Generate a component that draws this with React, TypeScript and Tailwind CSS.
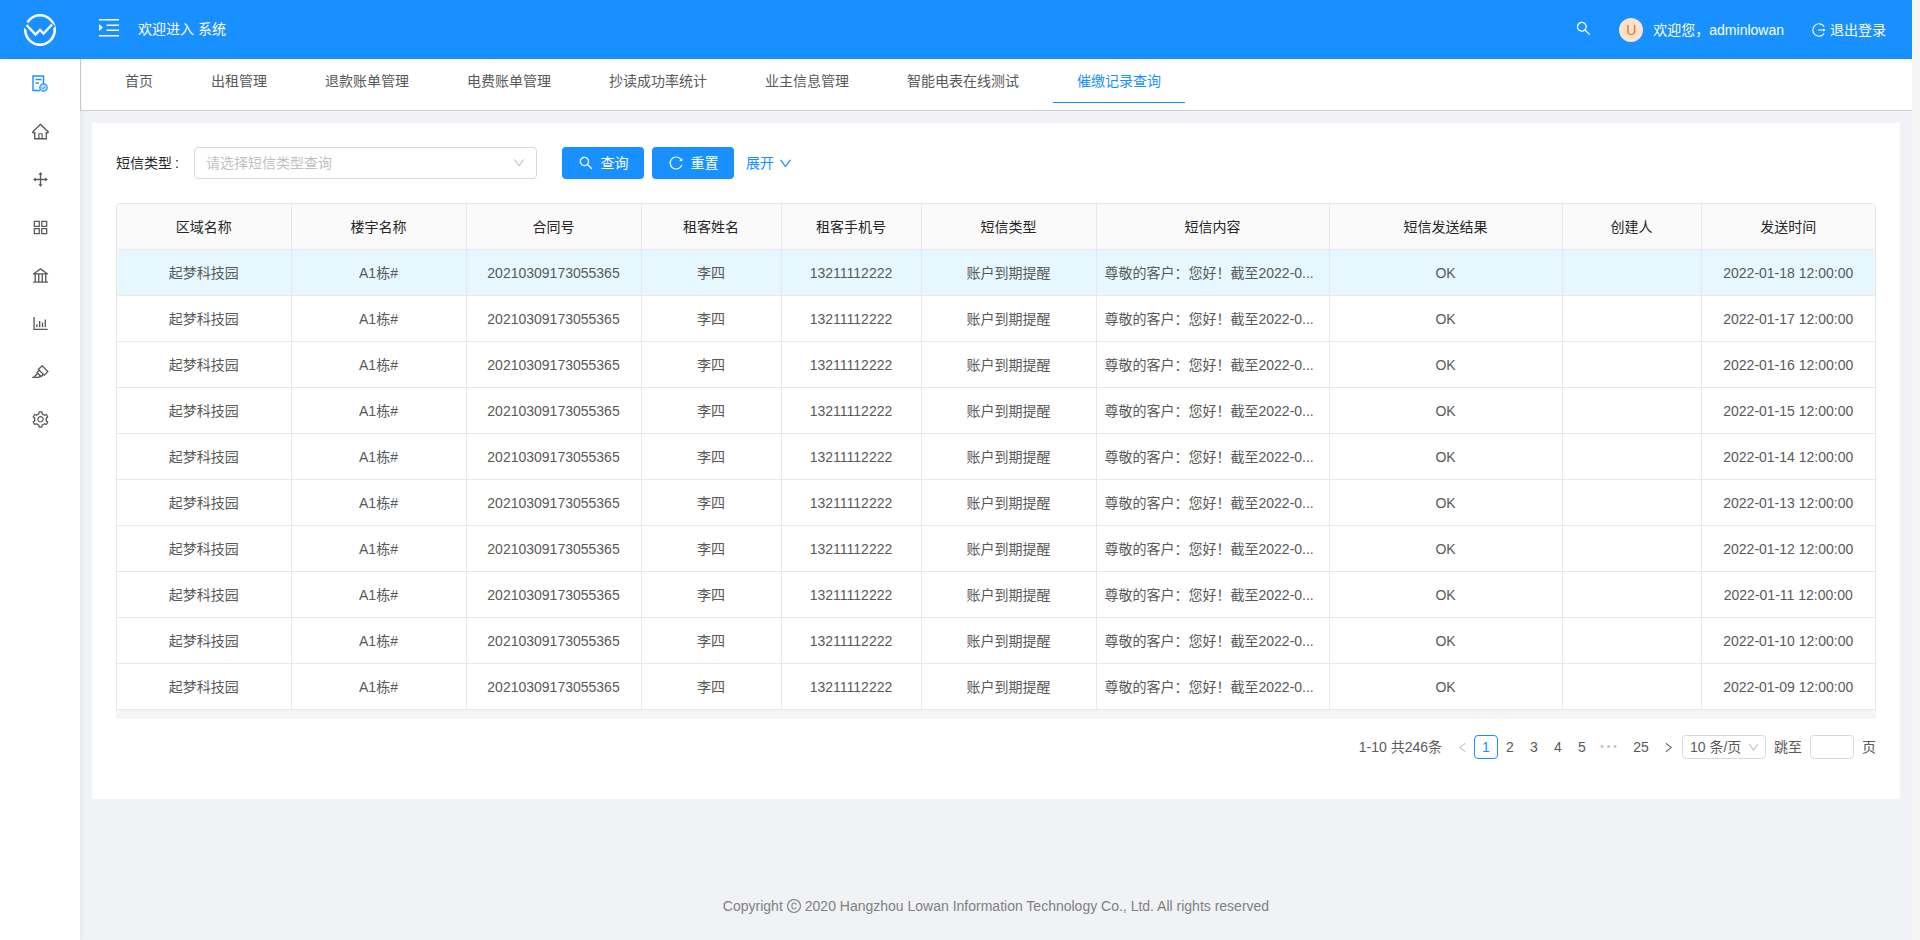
import React from "react";
import {
  AiOutlineSearch,
  AiOutlineHome,
  AiOutlineDrag,
  AiOutlineAppstore,
  AiOutlineBank,
  AiOutlineBarChart,
  AiOutlineHighlight,
  AiOutlineSetting,
  AiOutlineReload,
  AiOutlineDown,
  AiOutlineLeft,
  AiOutlineRight,
  AiOutlineCopyright,
} from "react-icons/ai";

const tabs = ["首页", "出租管理", "退款账单管理", "电费账单管理", "抄读成功率统计", "业主信息管理", "智能电表在线测试", "催缴记录查询"];
const cols = ["区域名称", "楼宇名称", "合同号", "租客姓名", "租客手机号", "短信类型", "短信内容", "短信发送结果", "创建人", "发送时间"];
const dates = ["18", "17", "16", "15", "14", "13", "12", "11", "10", "09"];

function Logo() {
  return (
    <svg width="34" height="34" viewBox="0 0 34 34" fill="none" stroke="white">
      <circle cx="17" cy="17" r="14.7" strokeWidth="2.6" />
      <path d="M1.5 10.5 L12.5 22.5 L17 18 L20.5 21.5 L30 11" stroke="#1890ff" strokeWidth="6" />
      <path d="M3.5 12 L12.5 21.5 L17 17 L20.5 20.5 L29 11.5" strokeWidth="2.4" />
    </svg>
  );
}

function MenuIcon() {
  return (
    <svg width="20" height="18" viewBox="0 0 20 18" fill="white">
      <rect x="0" y="0" width="20" height="1.5" />
      <rect x="7.5" y="5.5" width="12.5" height="1.5" />
      <rect x="7.5" y="10.5" width="12.5" height="1.5" />
      <rect x="0" y="16" width="20" height="1.5" />
      <path d="M0 5 L4 8.5 L0 12 Z" />
    </svg>
  );
}

function DocIcon() {
  return (
    <svg width="16" height="17" viewBox="0 0 16 17" fill="none" stroke="#1890ff">
      <path d="M11.5 9V1H1v14.5h7" strokeWidth="1.4" />
      <path d="M3.5 4.5h6M3.5 8h3.5" strokeWidth="1.4" />
      <circle cx="11.5" cy="12.5" r="3.7" fill="#bfe0ff" strokeWidth="1.2" />
      <path d="M9.8 12.5l1.3 1.3 2-2.2" strokeWidth="1" />
    </svg>
  );
}

function LogoutIcon() {
  return (
    <svg width="14" height="14" viewBox="0 0 14 14" fill="none" stroke="white" strokeWidth="1.1">
      <path d="M12.2 3.6A6.2 6.2 0 1 0 12.2 10.4" />
      <path d="M6 7h7" />
      <path d="M11 5.4 L13.4 7 L11 8.6" fill="white" stroke="none" />
    </svg>
  );
}

function Sidebar() {
  const icons = [AiOutlineHome, AiOutlineDrag, AiOutlineAppstore, AiOutlineBank, AiOutlineBarChart, AiOutlineHighlight, AiOutlineSetting];
  return (
    <aside className="relative z-10 w-[80px] shrink-0 bg-white shadow-[2px_0_3px_rgba(40,50,100,0.05)]">
      <div className="flex h-[48px] items-center justify-center">
        <DocIcon />
      </div>
      {icons.map((Icon, i) => (
        <div key={i} className="flex h-[48px] items-center justify-center text-[#595959]">
          <Icon size={19} />
        </div>
      ))}
    </aside>
  );
}

function Tabs() {
  return (
    <div className="flex h-[52px] border-b border-l border-[#cfcfd2] bg-white pl-[20px]">
      {tabs.map((t, i) => {
        const active = i === tabs.length - 1;
        return (
          <div
            key={t}
            className={
              active
                ? "mr-[10px] flex h-[44px] items-center border-b border-[#1890ff] px-[24px] text-[#1890ff]"
                : "mr-[10px] flex h-[44px] items-center px-[24px] text-[#595959]"
            }
          >
            {t}
          </div>
        );
      })}
    </div>
  );
}

function SearchForm() {
  return (
    <div className="flex h-[32px] items-center">
      <span className="w-[78px] text-[#262626]">
        短信类型<span className="ml-[3px]">:</span>
      </span>
      <div className="flex h-[32px] w-[343px] items-center justify-between rounded-[4px] border border-[#d9d9d9] pl-[11px] pr-[10px] text-[#bfbfbf]">
        <span>请选择短信类型查询</span>
        <AiOutlineDown size={14} />
      </div>
      <button className="ml-[25px] flex h-[32px] w-[82px] items-center justify-center gap-[7px] rounded-[4px] bg-[#1890ff] text-white">
        <AiOutlineSearch size={16} />
        <span>查询</span>
      </button>
      <button className="ml-[8px] flex h-[32px] w-[82px] items-center justify-center gap-[7px] rounded-[4px] bg-[#1890ff] text-white">
        <AiOutlineReload size={16} />
        <span>重置</span>
      </button>
      <span className="ml-[12px] flex items-center gap-[4px] text-[#1890ff]">
        展开
        <AiOutlineDown size={15} />
      </span>
    </div>
  );
}

function DataTable() {
  const cell = "border-b border-r border-[#e8e8e8] px-[8px] text-center";
  return (
    <div className="mt-[24px] overflow-hidden rounded-t-[4px] border-l border-t border-[#e8e8e8]">
      <table className="w-[1759px] table-fixed border-separate border-spacing-0">
        <colgroup>
          <col className="w-[174.5px]" />
          <col className="w-[175px]" />
          <col className="w-[175px]" />
          <col className="w-[140px]" />
          <col className="w-[140px]" />
          <col className="w-[175px]" />
          <col className="w-[233px]" />
          <col className="w-[233px]" />
          <col className="w-[139px]" />
          <col className="w-[174.5px]" />
        </colgroup>
        <thead>
          <tr className="h-[46px] bg-[#fafafa] text-[#262626]">
            {cols.map((c) => (
              <th key={c} className={`${cell} font-normal`}>
                {c}
              </th>
            ))}
          </tr>
        </thead>
        <tbody>
          {dates.map((d, i) => (
            <tr key={d} className={i === 0 ? "h-[46px] bg-[#e6f7ff] text-[#595959]" : "h-[46px] bg-white text-[#595959]"}>
              <td className={cell}>起梦科技园</td>
              <td className={cell}>A1栋#</td>
              <td className={cell}>20210309173055365</td>
              <td className={cell}>李四</td>
              <td className={cell}>13211112222</td>
              <td className={cell}>账户到期提醒</td>
              <td className="whitespace-nowrap border-b border-r border-[#e8e8e8] px-[8px] text-left">尊敬的客户：您好！截至2022-0...</td>
              <td className={cell}>OK</td>
              <td className={cell}></td>
              <td className={cell}>2022-01-{d} 12:00:00</td>
            </tr>
          ))}
        </tbody>
      </table>
    </div>
  );
}

function Pagination() {
  const page = "flex h-[24px] w-[24px] items-center justify-center";
  return (
    <div className="mt-[16px] flex h-[24px] items-center justify-end text-[#595959]">
      <span className="mr-[8px]">1-10 共246条</span>
      <span className={`${page} text-[#bfbfbf]`}>
        <AiOutlineLeft size={13} />
      </span>
      <span className={`${page} rounded-[4px] border border-[#1890ff] text-[#1890ff]`}>1</span>
      <span className={page}>2</span>
      <span className={page}>3</span>
      <span className={page}>4</span>
      <span className={page}>5</span>
      <span className={`${page} ml-[4px] text-[10px] tracking-[3px] text-[#bfbfbf]`}>•••</span>
      <span className={`${page} ml-[7px]`}>25</span>
      <span className={`${page} ml-[3px]`}>
        <AiOutlineRight size={13} />
      </span>
      <span className="ml-[2px] flex h-[24px] w-[84px] items-center justify-between rounded-[4px] border border-[#d9d9d9] pl-[7px] pr-[5px]">
        10 条/页
        <AiOutlineDown size={13} className="text-[#bfbfbf]" />
      </span>
      <span className="ml-[8px]">跳至</span>
      <span className="ml-[8px] h-[24px] w-[44px] rounded-[4px] border border-[#d9d9d9]"></span>
      <span className="ml-[8px]">页</span>
    </div>
  );
}

export default function App() {
  return (
    <div className="flex h-[940px] w-full overflow-hidden bg-[#f0f2f5] font-['Liberation_Sans','Noto_Sans_CJK_SC',sans-serif] text-[14px] leading-[22px]">
      <div className="flex min-w-0 flex-1 flex-col">
        <header className="flex h-[59px] shrink-0 items-center bg-[#1890ff] text-white">
          <div className="flex w-[80px] items-center justify-center">
            <Logo />
          </div>
          <div className="mb-[4px] ml-[19px]">
            <MenuIcon />
          </div>
          <span className="mb-[2px] ml-[19px]">欢迎进入 系统</span>
          <div className="ml-auto flex items-center pr-[26px]">
            <span className="mb-[2px] block">
              <AiOutlineSearch size={17} />
            </span>
            <span className="ml-[27px] flex h-[24px] w-[24px] items-center justify-center rounded-full bg-[#fde3cf] text-[#f56a00]">U</span>
            <span className="ml-[10px]">欢迎您，adminlowan</span>
            <span className="ml-[28px] flex items-center gap-[4px]">
              <LogoutIcon />
              退出登录
            </span>
          </div>
        </header>
        <div className="flex min-h-0 flex-1">
          <Sidebar />
          <main className="flex min-w-0 flex-1 flex-col">
            <Tabs />
            <div className="px-[12px] pt-[12px]">
              <section className="rounded-[2px] bg-white px-[24px] pb-[40px] pt-[24px]">
                <SearchForm />
                <DataTable />
                <div className="h-[9px] bg-[#f5f5f5]"></div>
                <Pagination />
              </section>
              <footer className="mt-[96px] flex items-center justify-center text-[#808080]">
                <span>Copyright</span>
                <AiOutlineCopyright size={16} className="mx-[3px]" />
                <span>2020 Hangzhou Lowan Information Technology Co., Ltd. All rights reserved</span>
              </footer>
            </div>
          </main>
        </div>
      </div>
      <div className="w-[8px] shrink-0 bg-[#f5f5f5]"></div>
    </div>
  );
}
